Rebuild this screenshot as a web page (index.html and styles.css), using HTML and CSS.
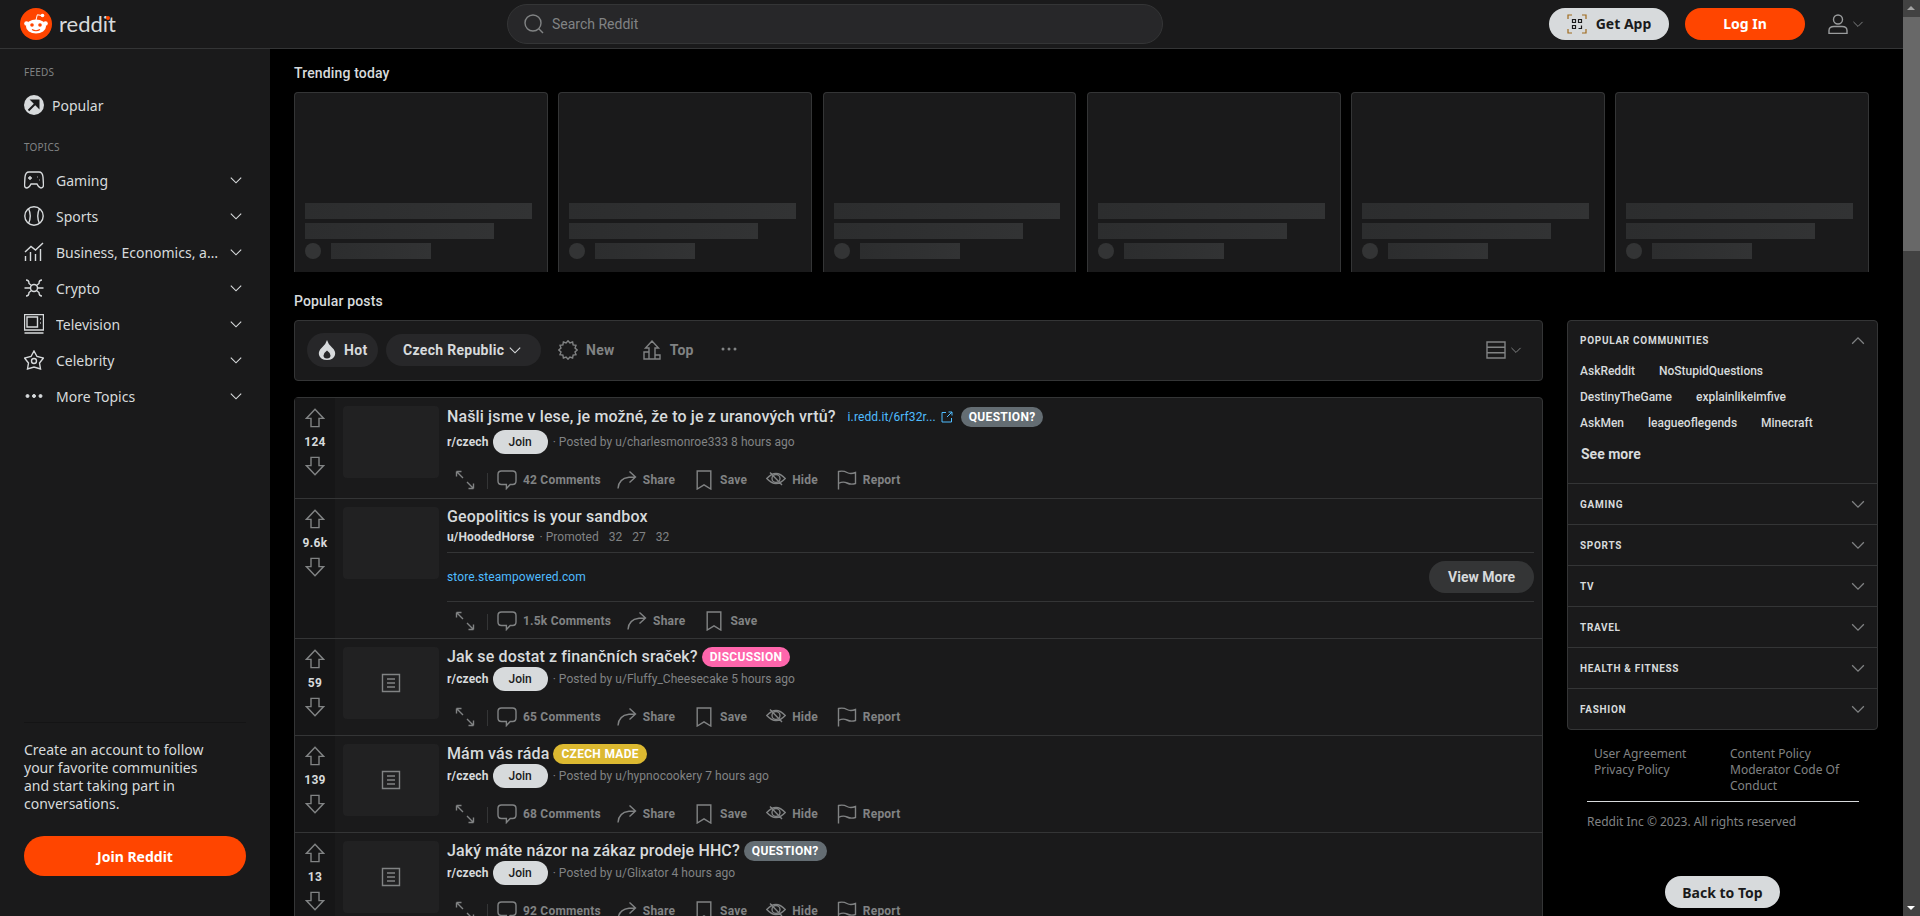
FILE: index.html
```html
<html>

<head>
  <meta charset="utf-8">
  <title>Reddit</title>
  <link rel="stylesheet" href="styles.css">
</head>

<body>
  <svg class="defs" width="0" height="0">
    <symbol id="i-up" viewBox="0 0 20 20"><path d="M10 1.200 18.600 10.400H14V18.600H6V10.400H1.400Z" /></symbol>
    <symbol id="i-down" viewBox="0 0 20 20"><path d="M10 18.800 18.600 9.600H14V1.400H6V9.600H1.400Z" /></symbol>
    <symbol id="i-expand" viewBox="0 0 20 20"><path d="M1.500 1.500 8 8M1.500 1.500V6.500M1.500 1.500H6.500M18.500 18.500 12 12M18.500 18.500V13.500M18.500 18.500H13.500" /></symbol>
    <symbol id="i-comment" viewBox="0 0 20 20"><path d="M4.500 1H15.500Q19 1 19 4.500V11Q19 14.500 15.500 14.500H13.200L9.400 18.600V14.500H4.500Q1 14.500 1 11V4.500Q1 1 4.500 1Z" /></symbol>
    <symbol id="i-share" viewBox="0 0 20 20"><path d="M1 18.500Q1.500 8.500 12 7.200H18M12.500 1.500 18.500 7 12.500 12.500" /></symbol>
    <symbol id="i-save" viewBox="0 0 20 20"><path d="M3.200 1H16.800V19L10 14.800 3.200 19Z" /></symbol>
    <symbol id="i-hide" viewBox="0 0 20 20"><path d="M.8 8.500Q10-1.500 19.200 8.500 10 18.500.8 8.500ZM4 2.500 16 15" /><circle cx="10" cy="8.500" r="4" /></symbol>
    <symbol id="i-flag" viewBox="0 0 20 20"><path d="M1.500 19.500V1.500Q6.500.5 10 2.500T18.500 2.500V13.500Q14 15 10 13T1.500 13.500" /></symbol>
    <symbol id="i-chevron" viewBox="0 0 20 20"><path d="M3.500 7 10 13.500 16.500 7" /></symbol>
    <symbol id="i-text" viewBox="0 0 20 20"><path d="M1.500 1.500H18.500V18.500H1.500ZM6 6H14M6 10H14M6 14H14" /></symbol>
  </svg>

  <div class="page">
    <div class="app">
      <header class="topbar">
        <a class="logo">
          <svg class="logo-mark" viewBox="0 0 32 32">
            <circle cx="16" cy="16" r="16" fill="#ff4500" />
            <g fill="#fff">
              <ellipse cx="16" cy="18.500" rx="10" ry="7" />
              <circle cx="6.500" cy="15.500" r="2.300" />
              <circle cx="25.500" cy="15.500" r="2.300" />
              <circle cx="22.500" cy="7.500" r="1.800" />
            </g>
            <path d="M16 12 17.300 6.800 22 7.500" fill="none" stroke="#fff" stroke-width="1" />
            <circle cx="12" cy="17" r="1.800" fill="#ff4500" />
            <circle cx="20" cy="17" r="1.800" fill="#ff4500" />
            <path d="M12 21.500Q16 24 20 21.500" fill="none" stroke="#ff4500" stroke-width="1.100" />
          </svg>
          <span class="wordmark">reddit<i class="wordmark-dot"></i></span>
        </a>
        <div class="search">
          <svg class="search-icon" viewBox="0 0 20 20"><circle cx="9" cy="9" r="8" /><path d="M14.800 14.800 19 19" /></svg>
          <span>Search Reddit</span>
        </div>
        <div class="top-actions">
          <a class="btn btn-light btn-app">
            <svg class="qr" viewBox="0 0 20 20">
              <path d="M1 5V1H5M15 1H19V5M19 15V19H15M5 19H1V15" stroke="#a06a1c" />
              <path d="M5.500 5.500H8.500V8.500H5.500ZM11.500 5.500H14.500V8.500H11.500ZM5.500 11.500H8.500V14.500H5.500ZM11.500 14.500H14.500V11.500" />
            </svg>
            Get App
          </a>
          <a class="btn btn-orange btn-login">Log In</a>
          <div class="user-menu">
            <svg class="user-icon" viewBox="0 0 20 20"><circle cx="10" cy="5.500" r="4.500" /><path d="M1 19.500V16.500Q1 12.500 6 12.500H14Q19 12.500 19 16.500V19.500Z" /></svg>
            <svg class="ico chev-small"><use href="#i-chevron" /></svg>
          </div>
        </div>
      </header>

      <div class="layout">
        <nav class="sidebar">
          <div class="side-label">Feeds</div>
          <a class="side-row side-popular">
            <svg class="popular-icon" viewBox="0 0 20 20">
              <circle cx="10" cy="10" r="10" fill="#d7dadc" />
              <path d="M4.500 15.500 13 7M8 5.500H14.500V12Z" fill="#1a1a1b" stroke="#1a1a1b" stroke-width="2" />
            </svg>
            <span>Popular</span>
          </a>
          <div class="side-label side-label-topics">Topics</div>
          <a class="side-row">
            <svg class="ico side-icon" viewBox="0 0 20 20"><path d="M5 2H15Q18.500 2 19 7L19.500 15Q19.500 18 17 18 15 18 13 14H7Q5 18 3 18 .5 18 .5 15L1 7Q1.500 2 5 2ZM4 8H8M6 6V10M13 7H13.500M15.500 10H16" /></svg>
            <span class="side-text">Gaming</span>
            <svg class="ico side-chev"><use href="#i-chevron" /></svg>
          </a>
          <a class="side-row">
            <svg class="ico side-icon" viewBox="0 0 20 20"><circle cx="10" cy="10" r="9.200" /><path d="M4.500 2.500Q8 10 4.500 17.500M15.500 2.500Q12 10 15.500 17.500" /></svg>
            <span class="side-text">Sports</span>
            <svg class="ico side-chev"><use href="#i-chevron" /></svg>
          </a>
          <a class="side-row">
            <svg class="ico side-icon" viewBox="0 0 20 20"><path d="M1 10 7 4.500 11.500 8 19 1M1.500 14V19M6.500 10V19M11.500 12V19M16.500 7V19" /></svg>
            <span class="side-text">Business, Economics, and Finance</span>
            <svg class="ico side-chev"><use href="#i-chevron" /></svg>
          </a>
          <a class="side-row">
            <svg class="ico side-icon" viewBox="0 0 20 20"><circle cx="10" cy="10" r="3.500" /><path d="M.5 10H6.500M13.500 10H19.500M2 2Q5 2 5 5.500L7.500 7.500M18 2Q15 2 15 5.500L12.500 7.500M2 18Q5 18 5 14.500L7.500 12.500M18 18Q15 18 15 14.500L12.500 12.500" /></svg>
            <span class="side-text">Crypto</span>
            <svg class="ico side-chev"><use href="#i-chevron" /></svg>
          </a>
          <a class="side-row">
            <svg class="ico side-icon" viewBox="0 0 20 20"><path d="M.5.5H19.500V16H.5ZM3 3H13.500V13H3ZM16 5H16.800M16 9H16.800M.5 19H19.500" /></svg>
            <span class="side-text">Television</span>
            <svg class="ico side-chev"><use href="#i-chevron" /></svg>
          </a>
          <a class="side-row">
            <svg class="ico side-icon" viewBox="0 0 20 20"><path d="M10 1 13 6.500 19.500 8 15.500 13 16.500 19 10 17 3.500 19 4.500 13 .5 8 7 6.500Z" /><circle cx="10" cy="11" r="2.500" /></svg>
            <span class="side-text">Celebrity</span>
            <svg class="ico side-chev"><use href="#i-chevron" /></svg>
          </a>
          <a class="side-row">
            <svg class="side-icon dots" viewBox="0 0 20 20"><circle cx="3.500" cy="10" r="1.500" /><circle cx="10" cy="10" r="1.500" /><circle cx="16.500" cy="10" r="1.500" /></svg>
            <span class="side-text">More Topics</span>
            <svg class="ico side-chev"><use href="#i-chevron" /></svg>
          </a>

          <div class="side-bottom">
            <p>Create an account to follow your favorite communities and start taking part in conversations.</p>
            <a class="btn btn-orange btn-join">Join Reddit</a>
          </div>
        </nav>

        <main class="main">
          <h2 class="section-title">Trending today</h2>
          <div class="trending">
            <div class="trend-card"><div class="bar bar-full"></div><div class="bar bar-mid"></div><div class="trend-by"><span class="bar-dot"></span><div class="bar bar-short"></div></div></div>
            <div class="trend-card"><div class="bar bar-full"></div><div class="bar bar-mid"></div><div class="trend-by"><span class="bar-dot"></span><div class="bar bar-short"></div></div></div>
            <div class="trend-card"><div class="bar bar-full"></div><div class="bar bar-mid"></div><div class="trend-by"><span class="bar-dot"></span><div class="bar bar-short"></div></div></div>
            <div class="trend-card"><div class="bar bar-full"></div><div class="bar bar-mid"></div><div class="trend-by"><span class="bar-dot"></span><div class="bar bar-short"></div></div></div>
            <div class="trend-card"><div class="bar bar-full"></div><div class="bar bar-mid"></div><div class="trend-by"><span class="bar-dot"></span><div class="bar bar-short"></div></div></div>
            <div class="trend-card"><div class="bar bar-full"></div><div class="bar bar-mid"></div><div class="trend-by"><span class="bar-dot"></span><div class="bar bar-short"></div></div></div>
          </div>

          <h2 class="section-title section-popular">Popular posts</h2>
          <div class="columns">
            <div class="feed">
              <div class="sortbar">
                <a class="sort-pill sort-hot">
                  <svg class="flame" viewBox="0 0 20 20"><path fill-rule="evenodd" d="M10 0Q11 4 15 7.500 19 11 18 15 16.500 20 10 20 3.500 20 2 15 1 11 5 7.500 9 4 10 0ZM10 10.500Q6.500 13 6.500 15.500 6.500 18.500 10 18.500 13.500 18.500 13.500 15.500 13.500 13 10 10.500Z" /></svg>
                  Hot
                </a>
                <a class="sort-pill sort-region">Czech Republic <svg class="ico chev-light"><use href="#i-chevron" /></svg></a>
                <a class="sort-item">
                  <svg class="ico" viewBox="0 0 20 20"><path d="M10 .8 11.900 3 14.600 2 15.100 4.900 18 5.400 17 8.100 19.200 10 17 11.900 18 14.600 15.100 15.100 14.600 18 11.900 17 10 19.200 8.100 17 5.400 18 4.900 15.100 2 14.600 3 11.900 .8 10 3 8.100 2 5.400 4.900 4.900 5.400 2 8.100 3Z" /></svg>
                  New
                </a>
                <a class="sort-item sort-top">
                  <svg class="ico" viewBox="0 0 20 20"><path d="M10 1 16.500 8H13V19H7V8H3.500ZM7 12H2V19H7M13 15H18V19H13" /></svg>
                  Top
                </a>
                <svg class="more-dots" viewBox="0 0 16 4"><circle cx="2" cy="2" r="1.500" /><circle cx="8" cy="2" r="1.500" /><circle cx="14" cy="2" r="1.500" /></svg>
                <div class="view-switch">
                  <svg class="ico" viewBox="0 0 20 20"><path d="M1 2H19V18H1ZM1 7.300H19M1 12.700H19" /></svg>
                  <svg class="ico chev-small"><use href="#i-chevron" /></svg>
                </div>
              </div>

              <div class="posts">
                <article class="post post-first">
                  <div class="votes">
                    <svg class="ico"><use href="#i-up" /></svg>
                    <span class="score">124</span>
                    <svg class="ico"><use href="#i-down" /></svg>
                  </div>
                  <div class="thumb"></div>
                  <div class="post-body">
                    <div class="post-title">
                      <h3>Našli jsme v lese, je možné, že to je z uranových vrtů?</h3>
                      <a class="outlink">i.redd.it/6rf32r...
                        <svg class="out-icon" viewBox="0 0 12 12"><path d="M5 1.500H1V11H10.500V7M6 6 11 1M7.500 1H11V4.500" /></svg>
                      </a>
                      <span class="flair flair-grey">QUESTION?</span>
                    </div>
                    <div class="post-meta">
                      <b>r/czech</b><a class="join">Join</a><span class="byline">· Posted by u/charlesmonroe333 8 hours ago</span>
                    </div>
                    <div class="post-actions">
                      <svg class="ico act-expand"><use href="#i-expand" /></svg>
                      <a class="act"><svg class="ico"><use href="#i-comment" /></svg>42 Comments</a>
                      <a class="act"><svg class="ico"><use href="#i-share" /></svg>Share</a>
                      <a class="act"><svg class="ico"><use href="#i-save" /></svg>Save</a>
                      <a class="act"><svg class="ico"><use href="#i-hide" /></svg>Hide</a>
                      <a class="act"><svg class="ico"><use href="#i-flag" /></svg>Report</a>
                    </div>
                  </div>
                </article>

                <article class="post post-ad">
                  <div class="votes">
                    <svg class="ico"><use href="#i-up" /></svg>
                    <span class="score">9.6k</span>
                    <svg class="ico"><use href="#i-down" /></svg>
                  </div>
                  <div class="thumb"></div>
                  <div class="post-body">
                    <div class="post-title">
                      <h3>Geopolitics is your sandbox</h3>
                    </div>
                    <div class="ad-meta"><b>u/HoodedHorse</b><span class="byline">· Promoted</span><span class="ad-num">32</span><span class="ad-num">27</span><span class="ad-num">32</span></div>
                    <div class="ad-link">
                      <a class="store">store.steampowered.com</a>
                      <a class="view-more">View More</a>
                    </div>
                    <div class="post-actions">
                      <svg class="ico act-expand"><use href="#i-expand" /></svg>
                      <a class="act"><svg class="ico"><use href="#i-comment" /></svg>1.5k Comments</a>
                      <a class="act"><svg class="ico"><use href="#i-share" /></svg>Share</a>
                      <a class="act"><svg class="ico"><use href="#i-save" /></svg>Save</a>
                    </div>
                  </div>
                </article>

                <article class="post">
                  <div class="votes">
                    <svg class="ico"><use href="#i-up" /></svg>
                    <span class="score">59</span>
                    <svg class="ico"><use href="#i-down" /></svg>
                  </div>
                  <div class="thumb"><svg class="ico"><use href="#i-text" /></svg></div>
                  <div class="post-body">
                    <div class="post-title">
                      <h3>Jak se dostat z finančních sraček?</h3>
                      <span class="flair flair-pink">DISCUSSION</span>
                    </div>
                    <div class="post-meta">
                      <b>r/czech</b><a class="join">Join</a><span class="byline">· Posted by u/Fluffy_Cheesecake 5 hours ago</span>
                    </div>
                    <div class="post-actions">
                      <svg class="ico act-expand"><use href="#i-expand" /></svg>
                      <a class="act"><svg class="ico"><use href="#i-comment" /></svg>65 Comments</a>
                      <a class="act"><svg class="ico"><use href="#i-share" /></svg>Share</a>
                      <a class="act"><svg class="ico"><use href="#i-save" /></svg>Save</a>
                      <a class="act"><svg class="ico"><use href="#i-hide" /></svg>Hide</a>
                      <a class="act"><svg class="ico"><use href="#i-flag" /></svg>Report</a>
                    </div>
                  </div>
                </article>

                <article class="post">
                  <div class="votes">
                    <svg class="ico"><use href="#i-up" /></svg>
                    <span class="score">139</span>
                    <svg class="ico"><use href="#i-down" /></svg>
                  </div>
                  <div class="thumb"><svg class="ico"><use href="#i-text" /></svg></div>
                  <div class="post-body">
                    <div class="post-title">
                      <h3>Mám vás ráda</h3>
                      <span class="flair flair-yellow">CZECH MADE</span>
                    </div>
                    <div class="post-meta">
                      <b>r/czech</b><a class="join">Join</a><span class="byline">· Posted by u/hypnocookery 7 hours ago</span>
                    </div>
                    <div class="post-actions">
                      <svg class="ico act-expand"><use href="#i-expand" /></svg>
                      <a class="act"><svg class="ico"><use href="#i-comment" /></svg>68 Comments</a>
                      <a class="act"><svg class="ico"><use href="#i-share" /></svg>Share</a>
                      <a class="act"><svg class="ico"><use href="#i-save" /></svg>Save</a>
                      <a class="act"><svg class="ico"><use href="#i-hide" /></svg>Hide</a>
                      <a class="act"><svg class="ico"><use href="#i-flag" /></svg>Report</a>
                    </div>
                  </div>
                </article>

                <article class="post">
                  <div class="votes">
                    <svg class="ico"><use href="#i-up" /></svg>
                    <span class="score">13</span>
                    <svg class="ico"><use href="#i-down" /></svg>
                  </div>
                  <div class="thumb"><svg class="ico"><use href="#i-text" /></svg></div>
                  <div class="post-body">
                    <div class="post-title">
                      <h3>Jaký máte názor na zákaz prodeje HHC?</h3>
                      <span class="flair flair-grey">QUESTION?</span>
                    </div>
                    <div class="post-meta">
                      <b>r/czech</b><a class="join">Join</a><span class="byline">· Posted by u/Glixator 4 hours ago</span>
                    </div>
                    <div class="post-actions">
                      <svg class="ico act-expand"><use href="#i-expand" /></svg>
                      <a class="act"><svg class="ico"><use href="#i-comment" /></svg>92 Comments</a>
                      <a class="act"><svg class="ico"><use href="#i-share" /></svg>Share</a>
                      <a class="act"><svg class="ico"><use href="#i-save" /></svg>Save</a>
                      <a class="act"><svg class="ico"><use href="#i-hide" /></svg>Hide</a>
                      <a class="act"><svg class="ico"><use href="#i-flag" /></svg>Report</a>
                    </div>
                  </div>
                </article>
              </div>
            </div>

            <aside class="aside">
              <div class="communities">
                <div class="comm-open">
                  <div class="comm-head comm-head-open">
                    <span>Popular Communities</span>
                    <svg class="ico comm-chev comm-chev-up"><use href="#i-chevron" /></svg>
                  </div>
                  <div class="comm-links">
                    <div class="comm-line"><a>AskReddit</a><a>NoStupidQuestions</a></div>
                    <div class="comm-line"><a>DestinyTheGame</a><a>explainlikeimfive</a></div>
                    <div class="comm-line"><a>AskMen</a><a>leagueoflegends</a><a>Minecraft</a></div>
                  </div>
                  <a class="see-more">See more</a>
                </div>
                <div class="comm-head comm-row"><span>Gaming</span><svg class="ico comm-chev"><use href="#i-chevron" /></svg></div>
                <div class="comm-head comm-row"><span>Sports</span><svg class="ico comm-chev"><use href="#i-chevron" /></svg></div>
                <div class="comm-head comm-row"><span>TV</span><svg class="ico comm-chev"><use href="#i-chevron" /></svg></div>
                <div class="comm-head comm-row"><span>Travel</span><svg class="ico comm-chev"><use href="#i-chevron" /></svg></div>
                <div class="comm-head comm-row"><span>Health &amp; Fitness</span><svg class="ico comm-chev"><use href="#i-chevron" /></svg></div>
                <div class="comm-head comm-row"><span>Fashion</span><svg class="ico comm-chev"><use href="#i-chevron" /></svg></div>
              </div>

              <div class="foot-links">
                <div class="foot-col"><a>User Agreement</a><a>Privacy Policy</a></div>
                <div class="foot-col foot-col-right"><a>Content Policy</a><a>Moderator Code Of Conduct</a></div>
              </div>
              <div class="copyright">Reddit Inc © 2023. All rights reserved</div>
              <a class="btn btn-light btn-top">Back to Top</a>
            </aside>
          </div>
        </main>
      </div>
    </div>

    <div class="scrollbar">
      <span class="scroll-up"></span>
      <div class="scroll-thumb"></div>
      <span class="scroll-down"></span>
    </div>
  </div>
</body>

</html>
```

FILE: styles.css
```css
* {
  box-sizing: border-box;
}

html,
body {
  margin: 0;
  height: 100%;
  overflow: hidden;
  background: #000;
}

body {
  color: #d7dadc;
  font-family: "Noto Sans", "Liberation Sans", sans-serif;
  font-size: 14px;
}

a {
  color: inherit;
  text-decoration: none;
}

.defs {
  position: absolute;
}

.page {
  display: flex;
  height: 916px;
}

.app {
  flex: 1;
  min-width: 0;
  display: flex;
  flex-direction: column;
}

/* icons drawn with a stroke */
.ico {
  width: 20px;
  height: 20px;
  flex: none;
  fill: none;
  stroke: #818384;
  stroke-width: 1.400;
}

/* top bar */
.topbar {
  height: 49px;
  flex: none;
  display: flex;
  align-items: center;
  background: #1a1a1b;
  border-bottom: 1px solid #343536;
  padding-bottom: 1px;
}

.logo {
  display: flex;
  align-items: center;
  width: 507px;
  padding-left: 20px;
}

.logo-mark {
  width: 32px;
  height: 32px;
}

.wordmark {
  position: relative;
  margin-left: 7px;
  font-family: "Lato", sans-serif;
  font-size: 22px;
  color: #d7dadc;
}

.wordmark-dot {
  position: absolute;
  right: 6px;
  top: 6px;
  width: 4px;
  height: 4px;
  border-radius: 50%;
  background: #ff4500;
}

.search {
  width: 656px;
  height: 40px;
  display: flex;
  align-items: center;
  padding-left: 16px;
  background: #272729;
  border: 1px solid #343536;
  border-radius: 20px;
  font-family: "Roboto", sans-serif;
  color: #818384;
}

.search-icon {
  width: 20px;
  height: 20px;
  margin-right: 8px;
  fill: none;
  stroke: #818384;
  stroke-width: 1.400;
}

.top-actions {
  flex: 1;
  display: flex;
  align-items: center;
  padding-left: 386px;
}

.btn {
  display: flex;
  align-items: center;
  justify-content: center;
  font-weight: 700;
  font-size: 14px;
}

.btn-light {
  background: #d7dadc;
  color: #1a1a1b;
}

.btn-orange {
  background: #ff4500;
  color: #fff;
}

.btn-app,
.btn-login {
  width: 120px;
  height: 32px;
  border-radius: 16px;
}

.btn-login {
  margin-left: 16px;
}

.qr {
  width: 20px;
  height: 20px;
  margin-right: 9px;
  fill: none;
  stroke: #1a1a1b;
  stroke-width: 1.200;
}

.user-menu {
  display: flex;
  align-items: center;
  margin-left: 23px;
}

.user-icon {
  width: 20px;
  height: 20px;
  fill: none;
  stroke: #9a9c9d;
  stroke-width: 1.400;
}

.chev-small {
  width: 14px;
  height: 14px;
  margin-left: 3px;
}

/* left navigation */
.layout {
  flex: 1;
  min-height: 0;
  display: flex;
}

.sidebar {
  width: 270px;
  flex: none;
  display: flex;
  flex-direction: column;
  padding-top: 15px;
  background: #1a1a1b;
}

.side-label {
  height: 16px;
  line-height: 16px;
  padding-left: 24px;
  font-size: 10px;
  letter-spacing: .2px;
  color: #818384;
  text-transform: uppercase;
  margin-bottom: 7px;
}

.side-label-topics {
  margin-top: 16px;
  margin-bottom: 7px;
}

.side-row {
  height: 36px;
  display: flex;
  align-items: center;
  padding: 0 26px 0 24px;
}

.side-popular {
  gap: 8px;
}

.popular-icon {
  width: 20px;
  height: 20px;
}

.side-icon {
  width: 20px;
  height: 20px;
  margin-right: 12px;
  stroke: #d7dadc;
}

.dots {
  fill: #d7dadc;
}

.side-text {
  width: 162px;
  white-space: nowrap;
  overflow: hidden;
  text-overflow: ellipsis;
}

.side-chev {
  width: 16px;
  height: 16px;
  margin-left: auto;
  stroke: #d7dadc;
}

.side-bottom {
  margin: auto 24px 0;
  padding: 18px 0 40px;
  border-top: 1px solid #141415;
}

.side-bottom p {
  margin: 0 0 23px;
  max-width: 185px;
  line-height: 18px;
}

.btn-join {
  height: 40px;
  border-radius: 20px;
}

/* main column */
.main {
  flex: 1;
  min-width: 0;
  overflow: hidden;
  padding: 16px 25px 0 24px;
  font-family: "Roboto", "Noto Sans", sans-serif;
}

.section-title {
  margin: 0 0 11px;
  font-size: 14px;
  line-height: 16px;
  font-weight: 500;
  letter-spacing: .15px;
  color: #d7dadc;
}

.section-popular {
  margin-top: 21px;
}

.trending {
  display: flex;
  gap: 10.500px;
  width: 1575px;
}

.trend-card {
  flex: 1;
  height: 180px;
  display: flex;
  flex-direction: column;
  justify-content: flex-end;
  padding: 0 15px 13px 10px;
  background: #1a1a1b;
  border: 1px solid #343536;
  border-bottom: 0;
  border-radius: 4px 4px 0 0;
}

.bar {
  height: 16px;
  margin-top: 4px;
  background: linear-gradient(90deg, #2c2d2e, #323334);
}

.bar-mid {
  width: 189px;
}

.trend-by {
  display: flex;
  align-items: center;
  gap: 10px;
  margin-top: 4px;
}

.bar-dot {
  width: 16px;
  height: 16px;
  border-radius: 50%;
  background: #333435;
}

.bar-short {
  width: 100px;
  margin-top: 0;
}

.columns {
  display: flex;
  gap: 24px;
  align-items: flex-start;
}

.feed {
  flex: 1;
  min-width: 0;
}

.sortbar {
  height: 61px;
  display: flex;
  align-items: center;
  padding: 0 12px 1px;
  background: #1a1a1b;
  border: 1px solid #343536;
  border-radius: 4px;
  margin-bottom: 16px;
  color: #818384;
  font-weight: 700;
  letter-spacing: .3px;
}

.sort-pill {
  display: flex;
  align-items: center;
  background: #272729;
  border-radius: 17px;
}

.sort-hot {
  height: 34px;
  width: 71px;
  padding-left: 10px;
  gap: 7px;
  color: #d7dadc;
}

.flame {
  width: 20px;
  height: 20px;
  fill: #d7dadc;
}

.sort-region {
  height: 32px;
  width: 155px;
  margin-left: 8px;
  padding-left: 17px;
  color: #d7dadc;
}

.chev-light {
  width: 16px;
  height: 16px;
  margin-left: 3px;
  stroke: #d7dadc;
}

.sort-item {
  display: flex;
  align-items: center;
  gap: 8px;
  margin-left: 17px;
}

.sort-top {
  margin-left: 27px;
}

.more-dots {
  width: 16px;
  height: 4px;
  margin-left: 27px;
  margin-bottom: 2px;
  fill: #818384;
}

.view-switch {
  display: flex;
  align-items: center;
  margin-left: auto;
  margin-right: 7px;
}

/* posts */
.posts {
  border: 1px solid #343536;
  border-radius: 4px 4px 0 0;
  background: #1a1a1b;
}

.post {
  display: flex;
  height: 97px;
  border-bottom: 1px solid #343536;
}

.post-first {
  height: 101px;
}

.post-ad {
  height: 140px;
}

.votes {
  width: 40px;
  flex: none;
  display: flex;
  flex-direction: column;
  align-items: center;
  padding-top: 10px;
  background: #161617;
}

.score {
  height: 28px;
  line-height: 28px;
  font-size: 12px;
  font-weight: 700;
  letter-spacing: .3px;
  color: #d7dadc;
}

.thumb {
  width: 96px;
  height: 72px;
  flex: none;
  display: flex;
  align-items: center;
  justify-content: center;
  margin: 8px 8px 0;
  background: #212122;
  border-radius: 4px;
}

.post-body {
  flex: 1;
  min-width: 0;
  padding-right: 8px;
}

.post-title {
  display: flex;
  align-items: center;
  height: 21px;
  margin-top: 7px;
}

.post-first .post-title {
  margin-top: 8px;
  margin-bottom: 3px;
}

.post-title h3 {
  margin: 0;
  font-size: 16px;
  line-height: 20px;
  font-weight: 500;
  letter-spacing: .13px;
  color: #d7dadc;
}

.outlink {
  display: flex;
  align-items: center;
  margin-left: 12px;
  font-size: 12px;
  letter-spacing: .1px;
  color: #4fbcff;
}

.out-icon {
  width: 12px;
  height: 12px;
  margin-left: 5px;
  fill: none;
  stroke: #4fbcff;
}

.flair {
  height: 20px;
  line-height: 20px;
  margin-left: 4px;
  padding: 0 8px;
  border-radius: 10px;
  font-size: 12px;
  font-weight: 700;
  letter-spacing: .3px;
  color: #fff;
}

.outlink + .flair {
  margin-left: 8px;
}

.flair-grey {
  background: #646d73;
}

.flair-pink {
  background: #ff66ac;
}

.flair-yellow {
  background: #dcb931;
}

.post-meta {
  display: flex;
  align-items: center;
  height: 24px;
  font-size: 12px;
}

.post-meta b,
.ad-meta b {
  letter-spacing: .15px;
  color: #d7dadc;
}

.join {
  width: 55px;
  height: 24px;
  line-height: 24px;
  margin-left: 4px;
  text-align: center;
  border-radius: 12px;
  background: #d7dadc;
  color: #1a1a1b;
  font-weight: 500;
}

.byline {
  margin-left: 5px;
  letter-spacing: .05px;
  color: #818384;
}

.ad-num {
  margin-left: 10px;
  color: #818384;
}

.post-actions {
  display: flex;
  align-items: center;
  height: 28px;
  margin-top: 12px;
  padding-left: 8px;
  font-size: 12px;
  font-weight: 700;
  letter-spacing: .2px;
  color: #818384;
}

.act-expand {
  margin-right: 22px;
  position: relative;
}

.act {
  display: flex;
  align-items: center;
  gap: 6px;
  margin-right: 19px;
}

.act-expand + .act {
  position: relative;
  margin-right: 16px;
}

/* small rule between the expand icon and the first action */
.act-expand + .act::before {
  content: "";
  position: absolute;
  left: -10px;
  top: 3px;
  width: 1px;
  height: 16px;
  background: #343536;
}

.ad-meta {
  font-size: 12px;
  line-height: 16px;
  margin-top: 2px;
  padding-bottom: 7px;
  border-bottom: 1px solid #343536;
}

.ad-link {
  display: flex;
  align-items: center;
  justify-content: space-between;
  height: 49px;
  border-bottom: 1px solid #343536;
}

.store {
  font-size: 12px;
  letter-spacing: .1px;
  color: #4fbcff;
}

.view-more {
  width: 105px;
  height: 32px;
  line-height: 32px;
  text-align: center;
  border-radius: 16px;
  background: #343536;
  color: #d7dadc;
  font-size: 14px;
  font-weight: 700;
}

.post-ad .post-actions {
  margin-top: 5px;
}

/* right column */
.aside {
  width: 311px;
  flex: none;
}

.communities {
  background: #1a1a1b;
  border: 1px solid #343536;
  border-radius: 4px;
}

.comm-open {
  height: 162px;
}

.comm-head {
  height: 41px;
  display: flex;
  align-items: center;
  justify-content: space-between;
  padding: 0 10px 0 12px;
  font-size: 10px;
  font-weight: 700;
  letter-spacing: .7px;
  text-transform: uppercase;
}

.comm-head-open {
  height: 39px;
}

.comm-row {
  border-top: 1px solid #343536;
}

.comm-chev {
  width: 18px;
  height: 18px;
}

.comm-chev-up {
  transform: rotate(180deg);
}

.comm-links {
  margin-top: 3px;
  padding: 0 12px;
}

.comm-line {
  display: flex;
  gap: 24px;
  height: 26px;
  line-height: 16px;
  font-size: 12px;
  font-weight: 500;
}

.see-more {
  display: block;
  padding: 3px 13px;
  font-size: 14px;
  font-weight: 700;
  line-height: 20px;
}

.foot-links {
  display: flex;
  padding: 16px 0 0 27px;
  font-family: "Noto Sans", sans-serif;
  font-size: 12px;
  line-height: 16px;
  color: #818384;
}

.foot-links a {
  display: block;
}

.foot-col {
  width: 136px;
  flex: none;
}

.foot-col-right {
  width: 130px;
}

.copyright {
  margin: 7px 19px 0 20px;
  padding-top: 12px;
  border-top: 1px solid #d7dadc;
  font-family: "Noto Sans", sans-serif;
  font-size: 12px;
  line-height: 16px;
  color: #818384;
}

.btn-top {
  width: 115px;
  height: 32px;
  margin: 46px 0 0 98px;
  border-radius: 16px;
  font-family: "Noto Sans", sans-serif;
}

/* window scrollbar */
.scrollbar {
  width: 17px;
  flex: none;
  position: relative;
  background: #424242;
}

.scroll-thumb {
  margin-top: 17px;
  height: 234px;
  background: #686868;
}

.scroll-up,
.scroll-down {
  position: absolute;
  left: 4px;
  width: 0;
  height: 0;
  border-left: 4px solid transparent;
  border-right: 4px solid transparent;
}

.scroll-up {
  top: 6px;
  border-bottom: 4px solid #a3a3a3;
}

.scroll-down {
  bottom: 6px;
  border-top: 4px solid #fff;
}
```
